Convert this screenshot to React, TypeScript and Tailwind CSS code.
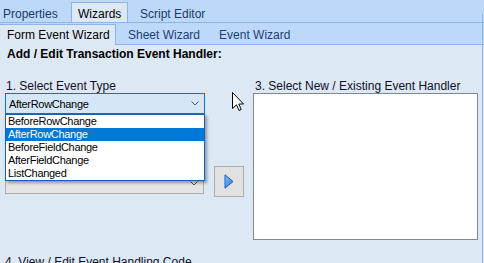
import React from "react";

const items = ["BeforeRowChange", "AfterRowChange", "BeforeFieldChange", "AfterFieldChange", "ListChanged"];

function Chevron() {
  return (
    <svg width="8" height="5" viewBox="0 0 8 5" className="block">
      <path d="M0.5 0.5 L4 4 L7.5 0.5" fill="none" stroke="#555" strokeWidth="1" />
    </svg>
  );
}

export default function App() {
  return (
    <div className="w-[484px] h-[263px] relative overflow-hidden bg-[#dde8f5] font-['Liberation_Sans',Arial,sans-serif] text-[12px] leading-[14px] text-[#101028]">
      {/* top tabs */}
      <div className="h-[22px] bg-[#bcd9fa] flex items-end">
        <div className="h-[20px] w-[71px] pt-[5px] pl-[3px] text-[#1e3a66]">Properties</div>
        <div className="h-[20px] w-[57px] pt-[4px] pl-[6px] border-l border-t border-r border-[#8cb4e8] bg-[#dde8f5] text-black">Wizards</div>
        <div className="h-[20px] pt-[5px] pl-[12px] text-[#1e3a66]">Script Editor</div>
      </div>
      {/* second tabs */}
      <div className="h-[23px] border-t border-b border-[#8cb4e8] bg-[#bcd9fa] flex items-end">
        <div className="h-[21px] w-[116px] -mb-px pt-[3px] pl-[7px] border-t border-r border-[#8cb4e8] bg-[#dde8f5] text-black">Form Event Wizard</div>
        <div className="h-[20px] pt-[4px] pl-[12px] text-[#1e3f74]">Sheet Wizard</div>
        <div className="h-[20px] pt-[4px] pl-[19px] text-[#1e3f74]">Event Wizard</div>
      </div>
      {/* content */}
      <div className="pt-[2px] pl-[7px] font-bold text-black">Add / Edit Transaction Event Handler:</div>
      <div className="mt-[19px] pl-[5px] flex items-start">
        <div className="w-[200px] flex flex-col relative">
          <div className="h-[13px] leading-[13px] pl-[1px]">1. Select Event Type</div>
          <div className="h-[21px] border border-[#1170c8] bg-[#d5e6f7] flex items-center justify-between pl-[3px] pr-[5px] text-[11px] tracking-[-0.3px] text-black">
            <span>AfterRowChange</span>
            <Chevron />
          </div>
          <div className="mt-[59px] h-[21px] border border-[#adadad] bg-[#e5e5e5] flex items-center justify-end pr-[5px] w-[199px]">
            <Chevron />
          </div>
          {/* dropdown popup */}
          <div className="absolute left-0 top-[34px] w-[200px] border border-[#1a5fb4] bg-white shadow-[2px_2px_3px_rgba(0,0,0,0.35)] text-[11px] tracking-[-0.3px] text-black">
            {items.map((it) => (
              <div
                key={it}
                className={
                  it === "AfterRowChange"
                    ? "h-[13px] leading-[13px] pl-[2px] bg-[#0078d7] text-white"
                    : "h-[13px] leading-[13px] pl-[2px]"
                }
              >
                {it}
              </div>
            ))}
          </div>
        </div>
        <div className="ml-[9px] mt-[86px] w-[30px] h-[31px] border border-[#adadad] bg-[#e1e1e1] flex items-center justify-center">
          <svg width="10" height="15" viewBox="0 0 10 15" className="block">
            <defs>
              <linearGradient id="tg" x1="0" y1="0" x2="1" y2="1">
                <stop offset="0" stopColor="#8cc4ff" />
                <stop offset="1" stopColor="#1f6fd6" />
              </linearGradient>
            </defs>
            <path d="M1 0.8 L9 7.5 L1 14.2 Z" fill="url(#tg)" stroke="#1b5cc0" strokeWidth="1" strokeLinejoin="round" />
          </svg>
        </div>
        <div className="ml-[9px] w-[225px] flex flex-col">
          <div className="h-[13px] leading-[13px] pl-[2px]">3. Select New / Existing Event Handler</div>
          <div className="h-[147px] border border-[#828790] bg-white" />
        </div>
      </div>
      <div className="mt-[15px] pl-[5px]">4. View / Edit Event Handling Code</div>
      {/* right border line */}
      <div className="absolute left-[482px] top-[14px] w-[1px] h-[249px] bg-[#8cb4e8]" />
      {/* mouse cursor */}
      <svg className="absolute left-[232px] top-[92px]" width="13" height="20" viewBox="0 0 13 20">
        <path d="M0.5 0.5 L0.5 16.5 L4.5 12.8 L7 18.5 L9.2 17.5 L6.8 12 L11.5 12 Z" fill="white" stroke="black" strokeWidth="1" strokeLinejoin="miter" />
      </svg>
    </div>
  );
}
